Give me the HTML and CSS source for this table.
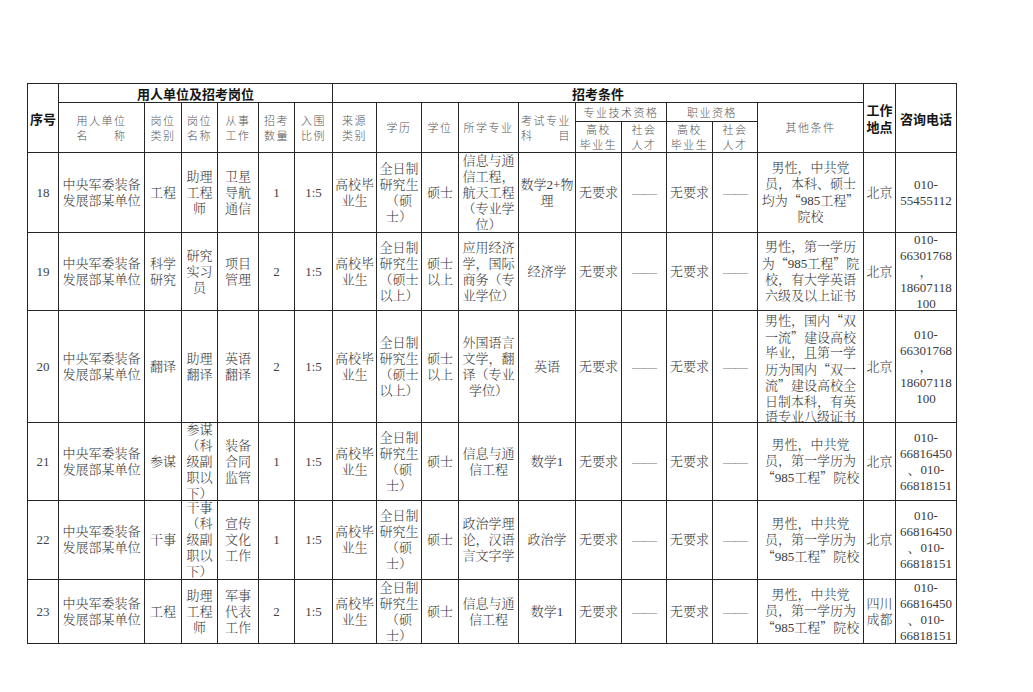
FILE: index.html
```html
<!DOCTYPE html>
<html lang="zh-CN">
<head>
<meta charset="utf-8">
<title>招考岗位表</title>
<link rel="stylesheet" href="styles.css">
</head>
<body>
<div class="page">
  <div class="sheet">
    <div class="c hb r3">序号</div>
    <div class="c hb s6">用人单位及招考岗位</div>
    <div class="c hb s10">招考条件</div>
    <div class="c hb r3">工作<br>地点</div>
    <div class="c hb r3">咨询电话</div>

    <div class="c h r2">用人单位<br>名　　称</div>
    <div class="c h r2">岗位<br>类别</div>
    <div class="c h r2">岗位<br>名称</div>
    <div class="c h r2">从事<br>工作</div>
    <div class="c h r2">招考<br>数量</div>
    <div class="c h r2">入围<br>比例</div>
    <div class="c h r2">来源<br>类别</div>
    <div class="c h r2">学历</div>
    <div class="c h r2">学位</div>
    <div class="c h r2">所学专业</div>
    <div class="c h r2 left">考试专业<br>科　　目</div>
    <div class="c h s2">专业技术资格</div>
    <div class="c h s2">职业资格</div>
    <div class="c h r2">其他条件</div>

    <div class="c h">高校<br>毕业生</div>
    <div class="c h">社会<br>人才</div>
    <div class="c h">高校<br>毕业生</div>
    <div class="c h">社会<br>人才</div>

    <!-- 18 -->
    <div class="c num">18</div>
    <div class="c">中央军委装备<br>发展部某单位</div>
    <div class="c">工程</div>
    <div class="c">助理<br>工程<br>师</div>
    <div class="c">卫星<br>导航<br>通信</div>
    <div class="c num">1</div>
    <div class="c num">1:5</div>
    <div class="c">高校毕<br>业生</div>
    <div class="c">全日制<br>研究生<br>（硕<br>士）</div>
    <div class="c">硕士</div>
    <div class="c">信息与通<br>信工程，<br>航天工程<br>（专业学<br>位）</div>
    <div class="c">数学2+物<br>理</div>
    <div class="c">无要求</div>
    <div class="c dash">——</div>
    <div class="c">无要求</div>
    <div class="c dash">——</div>
    <div class="c"><div>男性，中共党<br>员，本科、硕士<br>均为<span class="q">“</span>985工程<span class="q">”</span><br>院校</div></div>
    <div class="c">北京</div>
    <div class="c">010-<br>55455112</div>

    <!-- 19 -->
    <div class="c num">19</div>
    <div class="c">中央军委装备<br>发展部某单位</div>
    <div class="c">科学<br>研究</div>
    <div class="c">研究<br>实习<br>员</div>
    <div class="c">项目<br>管理</div>
    <div class="c num">2</div>
    <div class="c num">1:5</div>
    <div class="c">高校毕<br>业生</div>
    <div class="c">全日制<br>研究生<br>（硕士<br>以上）</div>
    <div class="c">硕士<br>以上</div>
    <div class="c">应用经济<br>学，国际<br>商务（专<br>业学位）</div>
    <div class="c">经济学</div>
    <div class="c">无要求</div>
    <div class="c dash">——</div>
    <div class="c">无要求</div>
    <div class="c dash">——</div>
    <div class="c"><div>男性，第一学历<br>为<span class="q">“</span>985工程<span class="q">”</span>院<br>校，有大学英语<br>六级及以上证书</div></div>
    <div class="c">北京</div>
    <div class="c">010-<br>66301768<br>，<br>18607118<br>100</div>

    <!-- 20 -->
    <div class="c num">20</div>
    <div class="c">中央军委装备<br>发展部某单位</div>
    <div class="c">翻译</div>
    <div class="c">助理<br>翻译</div>
    <div class="c">英语<br>翻译</div>
    <div class="c num">2</div>
    <div class="c num">1:5</div>
    <div class="c">高校毕<br>业生</div>
    <div class="c">全日制<br>研究生<br>（硕士<br>以上）</div>
    <div class="c">硕士<br>以上</div>
    <div class="c">外国语言<br>文学，翻<br>译（专业<br>学位）</div>
    <div class="c">英语</div>
    <div class="c">无要求</div>
    <div class="c dash">——</div>
    <div class="c">无要求</div>
    <div class="c dash">——</div>
    <div class="c top"><div>男性，国内<span class="q">“</span>双<br>一流<span class="q">”</span>建设高校<br>毕业，且第一学<br>历为国内<span class="q">“</span>双一<br>流<span class="q">”</span>建设高校全<br>日制本科，有英<br>语专业八级证书</div></div>
    <div class="c">北京</div>
    <div class="c">010-<br>66301768<br>，<br>18607118<br>100</div>

    <!-- 21 -->
    <div class="c num">21</div>
    <div class="c">中央军委装备<br>发展部某单位</div>
    <div class="c">参谋</div>
    <div class="c">参谋<br>（科<br>级副<br>职以<br>下）</div>
    <div class="c">装备<br>合同<br>监管</div>
    <div class="c num">1</div>
    <div class="c num">1:5</div>
    <div class="c">高校毕<br>业生</div>
    <div class="c">全日制<br>研究生<br>（硕<br>士）</div>
    <div class="c">硕士</div>
    <div class="c">信息与通<br>信工程</div>
    <div class="c">数学1</div>
    <div class="c">无要求</div>
    <div class="c dash">——</div>
    <div class="c">无要求</div>
    <div class="c dash">——</div>
    <div class="c"><div>男性，中共党<br>员，第一学历为<br><span class="q">“</span>985工程<span class="q">”</span>院校</div></div>
    <div class="c">北京</div>
    <div class="c">010-<br>66816450<br>、010-<br>66818151</div>

    <!-- 22 -->
    <div class="c num">22</div>
    <div class="c">中央军委装备<br>发展部某单位</div>
    <div class="c">干事</div>
    <div class="c">干事<br>（科<br>级副<br>职以<br>下）</div>
    <div class="c">宣传<br>文化<br>工作</div>
    <div class="c num">1</div>
    <div class="c num">1:5</div>
    <div class="c">高校毕<br>业生</div>
    <div class="c">全日制<br>研究生<br>（硕<br>士）</div>
    <div class="c">硕士</div>
    <div class="c">政治学理<br>论，汉语<br>言文字学</div>
    <div class="c">政治学</div>
    <div class="c">无要求</div>
    <div class="c dash">——</div>
    <div class="c">无要求</div>
    <div class="c dash">——</div>
    <div class="c"><div>男性，中共党<br>员，第一学历为<br><span class="q">“</span>985工程<span class="q">”</span>院校</div></div>
    <div class="c">北京</div>
    <div class="c">010-<br>66816450<br>、010-<br>66818151</div>

    <!-- 23 -->
    <div class="c num">23</div>
    <div class="c">中央军委装备<br>发展部某单位</div>
    <div class="c">工程</div>
    <div class="c">助理<br>工程<br>师</div>
    <div class="c">军事<br>代表<br>工作</div>
    <div class="c num">2</div>
    <div class="c num">1:5</div>
    <div class="c">高校毕<br>业生</div>
    <div class="c">全日制<br>研究生<br>（硕<br>士）</div>
    <div class="c">硕士</div>
    <div class="c">信息与通<br>信工程</div>
    <div class="c">数学1</div>
    <div class="c">无要求</div>
    <div class="c dash">——</div>
    <div class="c">无要求</div>
    <div class="c dash">——</div>
    <div class="c"><div>男性，中共党<br>员，第一学历为<br><span class="q">“</span>985工程<span class="q">”</span>院校</div></div>
    <div class="c">四川<br>成都</div>
    <div class="c">010-<br>66816450<br>、010-<br>66818151</div>
  </div>
</div>
</body>
</html>
```

FILE: styles.css
```css
html, body {
  margin: 0;
  padding: 0;
  background: #ffffff;
}

.page {
  padding: 83px 0 0 27px;
}

.sheet {
  display: grid;
  width: max-content;
  grid-template-columns: 30px 85px 36px 35px 40px 35px 37px 43px 44px 36px 59px 56px 45px 44px 45px 44px 105px 31px 60px;
  grid-template-rows: 18px 18px 30px 79px 77px 111px 77px 78px 63px;
  gap: 1px;
  padding: 1px;
  background: #262626;
  font-family: "Liberation Serif", "Noto Serif CJK SC", "Noto Sans CJK SC", serif;
  font-size: 13px;
  line-height: 16px;
  color: #3a3a3a;
  font-weight: 300;
}

.c {
  background: #ffffff;
  display: flex;
  align-items: center;
  justify-content: center;
  text-align: center;
  white-space: nowrap;
  overflow: hidden;
}

.top {
  align-items: flex-start;
  padding-top: 1px;
  line-height: 15.5px;
}

.q {
  font-family: "Noto Sans CJK SC", sans-serif;
}

.num {
  color: #444;
}

.dash {
  color: #777;
  letter-spacing: -1px;
}

.hb {
  font-family: "Noto Sans CJK SC", sans-serif;
  font-weight: 700;
  font-size: 13px;
  line-height: 17px;
  color: #151515;
}

.h {
  font-family: "Noto Sans CJK SC", sans-serif;
  font-size: 11px;
  line-height: 15px;
  letter-spacing: 1.5px;
  color: #555;
  font-weight: 300;
}

.left {
  text-align: left;
  justify-content: flex-start;
  padding-left: 2px;
}

.r2 { grid-row: span 2; }
.r3 { grid-row: span 3; }
.s2 { grid-column: span 2; }
.s6 { grid-column: span 6; }
.s10 { grid-column: span 10; }
```
